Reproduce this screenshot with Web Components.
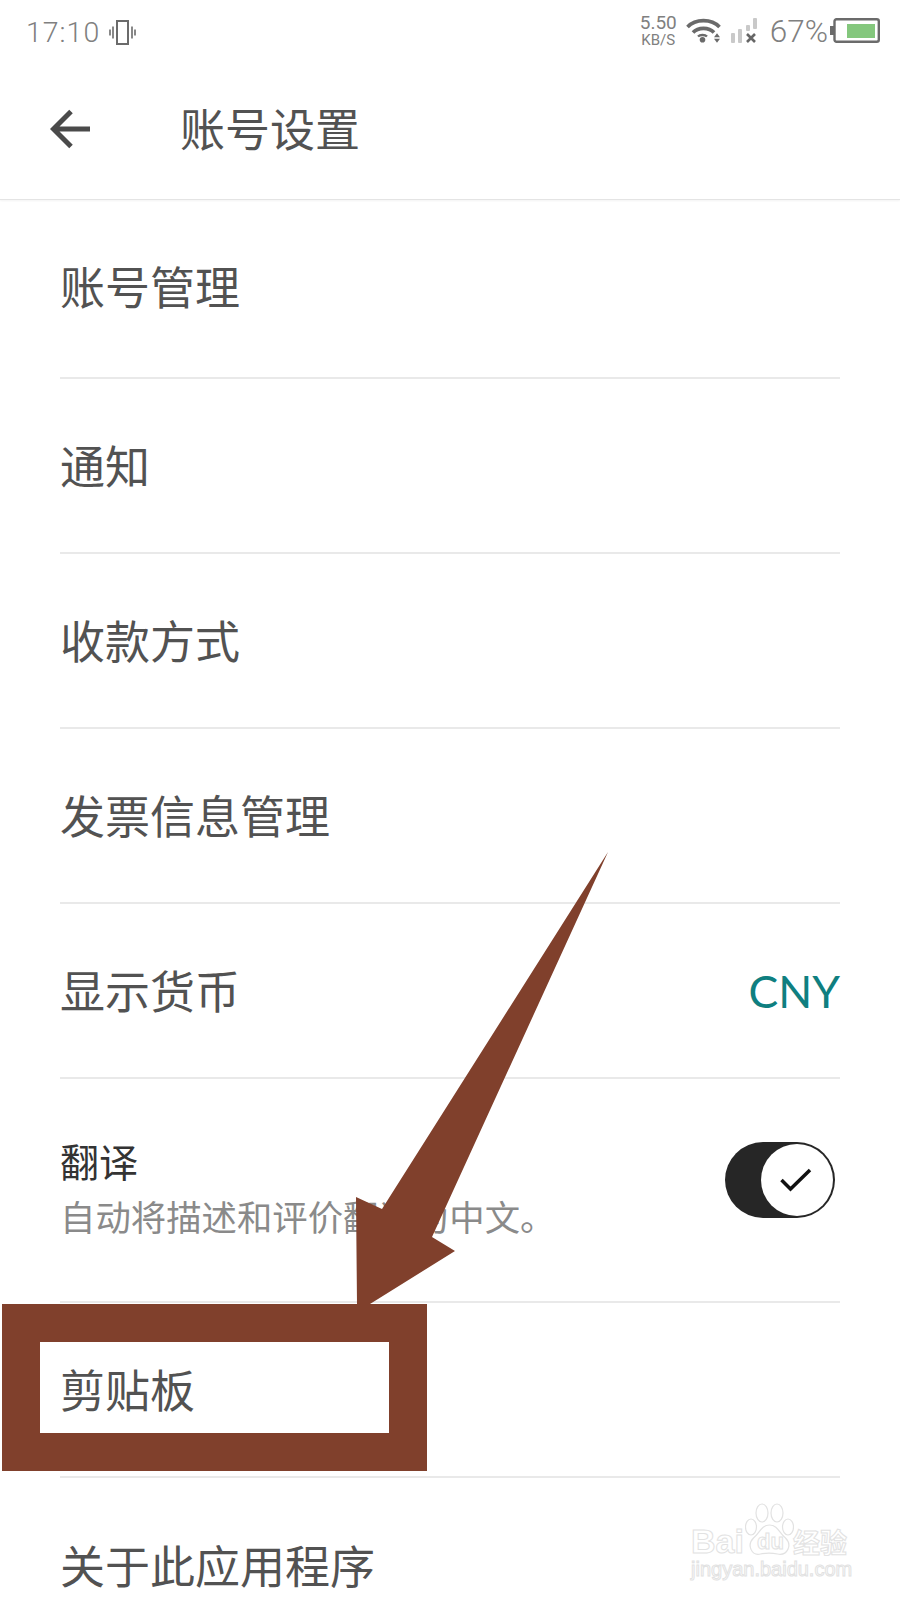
<!DOCTYPE html>
<html lang="zh">
<head>
<meta charset="utf-8">
<title>账号设置</title>
<style>
    html, body {
        margin: 0;
        padding: 0;
        background: #fff;
    }
</style>
</head>
<body>
<settings-screen>
    <status-bar></status-bar>
    <app-bar title="账号设置"></app-bar>
    <setting-row first>账号管理</setting-row>
    <setting-row>通知</setting-row>
    <setting-row>收款方式</setting-row>
    <setting-row>发票信息管理</setting-row>
    <setting-row>显示货币<span slot="end">CNY</span></setting-row>
    <setting-row tall>
        翻译
        <span slot="sub">自动将描述和评价翻译为中文。</span>
        <toggle-switch slot="end"></toggle-switch>
    </setting-row>
    <setting-row>剪贴板</setting-row>
    <setting-row last>关于此应用程序</setting-row>
    <guide-arrow></guide-arrow>
    <baidu-mark></baidu-mark>
</settings-screen>

<script>
const FONT = `"Noto Sans CJK SC", "Noto Sans", sans-serif`;

class SettingsScreen extends HTMLElement {
    constructor() {
        super();
        this.attachShadow({ mode: "open" }).innerHTML = `
        <style>
            :host {
                display: flex;
                flex-direction: column;
                position: relative;
                width: 900px;
                height: 1600px;
                overflow: hidden;
                background: #fff;
                font-family: ${FONT};
                color: #525252;
            }
        </style>
        <slot></slot>`;
    }
}

class StatusBar extends HTMLElement {
    constructor() {
        super();
        this.attachShadow({ mode: "open" }).innerHTML = `
        <style>
            :host {
                display: flex;
                flex-shrink: 0;
                align-items: center;
                justify-content: space-between;
                height: 64px;
                padding: 0 20px 0 26px;
                color: #808080;
                font-family: "Roboto", sans-serif;
                font-weight: 300;
            }
            .side { display: flex; align-items: center; }
            .right { margin-top: -3px; }
            .time { font-size: 28.500px; letter-spacing: 1px; margin-right: 9px; }
            .speed { display: flex; flex-direction: column; align-items: center; font-size: 19px; line-height: 18px; font-weight: 400; margin-right: 9px; }
            .speed small { font-size: 15px; line-height: 16px; }
            .pct { font-size: 31.500px; line-height: 36px; margin: 2px 2px 0 12px; }
            svg { display: block; }
        </style>
        <div class="side">
            <span class="time">17:10</span>
            <svg width="27" height="25" viewBox="0 0 27 25" fill="none" stroke="#6b6b6b">
                <rect x="8" y="1" width="11" height="23" stroke-width="2"/>
                <path d="M4 6.500v12M1 9.500v6M23 6.500v12M26 9.500v6" stroke-width="1.600"/>
            </svg>
        </div>
        <div class="side right">
            <span class="speed">5.50<small>KB/S</small></span>
            <svg width="35" height="25" viewBox="0 0 35 25" fill="none" stroke="#6a6a6a">
                <path d="M1.500 9C9.500 .500 25.500 .500 33.500 9" stroke-width="3.600"/>
                <path d="M7 14.500C12 9 23 9 28 14.500" stroke-width="3.600"/>
                <path d="M12 18.500C14 16.500 19 16.500 21 18.500" stroke-width="2.400"/>
                <circle cx="16.500" cy="21.800" r="2.800" fill="#6a6a6a" stroke="none"/>
                <path d="M28 19.200l3-4 3 4zM28 20.800l3 4 3-4z" fill="#6a6a6a" stroke="none"/>
            </svg>
            <svg width="27" height="25" viewBox="0 0 27 25" style="margin-left:10px">
                <rect x="0" y="15" width="4" height="10" rx="1" fill="#c9c9c9"/>
                <rect x="7" y="11" width="4" height="14" rx="1" fill="#c9c9c9"/>
                <rect x="15" y="7" width="4" height="6" rx="1" fill="#c9c9c9"/>
                <rect x="22" y="0" width="4" height="11" rx="1" fill="#c9c9c9"/>
                <path d="M16 16l8 8M24 16l-8 8" stroke="#666" stroke-width="2.600"/>
            </svg>
            <span class="pct">67%</span>
            <svg width="50" height="25" viewBox="0 0 50 25">
                <rect x="0" y="8" width="4" height="9" fill="#6b6b6b"/>
                <rect x="4.500" y="1.200" width="44.300" height="22.600" rx="2" fill="#fff" stroke="#6b6b6b" stroke-width="2.400"/>
                <rect x="17" y="6" width="28" height="14" fill="#84c77d"/>
            </svg>
        </div>`;
    }
}

class AppBar extends HTMLElement {
    constructor() {
        super();
        this.attachShadow({ mode: "open" }).innerHTML = `
        <style>
            :host {
                display: flex;
                flex-shrink: 0;
                align-items: center;
                box-sizing: border-box;
                height: 136px;
                padding: 0 0 9px 50px;
                border-bottom: 1px solid #e4e4e4;
                box-shadow: 0 1px 2px rgba(0,0,0,0.05);
                font-size: 45px;
            }
            svg { display: block; margin: 4px 90px 0 0; }
        </style>
        <svg width="40" height="40" viewBox="0 0 40 40" fill="none" stroke="#4a4a4a" stroke-width="5">
            <path d="M40 20H4M21 2.500L3.500 20 21 37.500"/>
        </svg>
        <span>${this.getAttribute("title")}</span>`;
    }
}

class SettingRow extends HTMLElement {
    constructor() {
        super();
        this.attachShadow({ mode: "open" }).innerHTML = `
        <style>
            :host {
                display: block;
                flex-shrink: 0;
                padding: 0 60px;
                font-size: 45px;
            }
            .row {
                display: flex;
                align-items: center;
                justify-content: space-between;
                box-sizing: border-box;
                height: 175px;
                padding-bottom: 3px;
                border-bottom: 2px solid #e9e9e9;
            }
            :host([first]) .row { height: 179px; padding-bottom: 6px; }
            :host([tall]) .row { height: 224px; padding-bottom: 4px; }
            :host([last]) .row { border-bottom: 0; }
            :host([tall]) .main { font-size: 39px; color: #333; line-height: 56px; }
            .sub { display: block; font-size: 35.400px; line-height: 56px; color: #8a8a8a; }
            ::slotted(span[slot="end"]) { font-family: "Lato", sans-serif; font-size: 44.500px; color: #0f7f80; margin-top: 3px; }
        </style>
        <div class="row">
            <div class="main"><slot></slot><span class="sub"><slot name="sub"></slot></span></div>
            <slot name="end"></slot>
        </div>`;
    }
}

class ToggleSwitch extends HTMLElement {
    constructor() {
        super();
        this.attachShadow({ mode: "open" }).innerHTML = `
        <style>
            :host {
                display: block;
                position: relative;
                width: 110px;
                height: 76px;
                margin: -16px 5px 0 0;
                border-radius: 38px;
                background: #262626;
            }
            .knob {
                position: absolute;
                top: 2px;
                right: 2px;
                width: 72px;
                height: 72px;
                border-radius: 50%;
                background: #fff;
            }
            svg { display: block; position: absolute; left: 19px; top: 24px; }
        </style>
        <div class="knob">
            <svg width="32" height="26" viewBox="0 0 32 26" fill="none" stroke="#111" stroke-width="3.500">
                <path d="M1.500 12l9 9L30 2"/>
            </svg>
        </div>`;
    }
}

// hand-drawn markup on top of the screenshot
class GuideArrow extends HTMLElement {
    constructor() {
        super();
        this.attachShadow({ mode: "open" }).innerHTML = `
        <style>
            :host { position: absolute; inset: 0; pointer-events: none; }
            svg { display: block; }
        </style>
        <svg width="900" height="1600" viewBox="0 0 900 1600" fill="#80402c">
            <path d="M608 852L382 1209 356 1197 357 1304H370L455 1251 432 1237Z"/>
            <path fill-rule="evenodd" d="M2 1304H427V1471H2ZM40 1342V1433H389V1342Z"/>
        </svg>`;
    }
}

class BaiduMark extends HTMLElement {
    constructor() {
        super();
        this.attachShadow({ mode: "open" }).innerHTML = `
        <style>
            :host {
                position: absolute;
                left: 690px;
                top: 1502px;
                width: 170px;
                height: 84px;
                color: #fff;
                font-family: "Liberation Sans", "Noto Sans CJK SC", sans-serif;
                -webkit-text-stroke: 1px #e2e2e2;
                line-height: 1;
            }
            span { position: absolute; white-space: nowrap; }
            .bai { left: 1px; top: 22px; font-size: 34px; font-weight: 700; }
            .du { left: 67px; top: 29px; font-size: 22px; font-weight: 700; z-index: 1; }
            .jing { left: 1px; top: 57px; font-size: 20px; }
            .cn { left: 103px; top: 26px; font-size: 27px; font-family: "Noto Sans CJK SC", sans-serif; font-weight: 700; }
            svg { position: absolute; left: 55px; top: 1px; }
        </style>
        <svg width="49" height="55" viewBox="0 0 49 55" fill="#fff" stroke="#e2e2e2" stroke-width="1.200">
            <ellipse cx="6" cy="24" rx="5.500" ry="8"/>
            <ellipse cx="17" cy="10" rx="6" ry="9"/>
            <ellipse cx="32" cy="10" rx="6" ry="9"/>
            <ellipse cx="43" cy="24" rx="5.500" ry="8"/>
            <path d="M24.500 22c8 0 10 8 16 13 7 7 2 18-8 16-5-1-12-1-17 0-9 2-14-9-7-16 6-5 8-13 16-13z"/>
        </svg>
        <span class="bai">Bai</span>
        <span class="du">du</span>
        <span class="cn">经验</span>
        <span class="jing">jingyan.baidu.com</span>`;
    }
}

customElements.define("settings-screen", SettingsScreen);
customElements.define("status-bar", StatusBar);
customElements.define("app-bar", AppBar);
customElements.define("setting-row", SettingRow);
customElements.define("toggle-switch", ToggleSwitch);
customElements.define("guide-arrow", GuideArrow);
customElements.define("baidu-mark", BaiduMark);
</script>
</body>
</html>
